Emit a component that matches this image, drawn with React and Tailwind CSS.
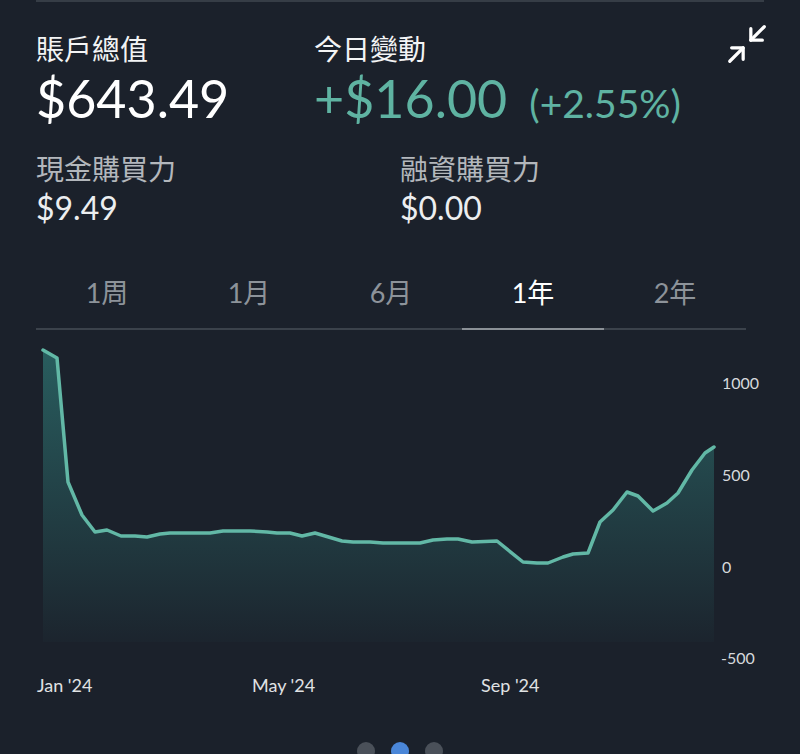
import { Minimize2 } from "lucide-react";

const points = [
  [43, 350], [57, 358], [68, 482], [82, 515], [95, 532], [107, 530], [121, 536],
  [135, 536], [147, 537], [160, 534], [170, 533], [210, 533], [223, 531], [250, 531],
  [267, 532], [277, 533], [290, 533], [302, 536], [315, 533], [342, 541], [353, 542],
  [370, 542], [383, 543], [420, 543], [433, 540], [447, 539], [458, 539], [472, 542],
  [497, 541], [523, 562], [537, 563], [548, 563], [563, 557], [573, 554], [588, 553],
  [600, 522], [613, 510], [627, 492], [638, 496], [653, 511], [667, 503], [678, 493],
  [692, 470], [705, 453], [714, 447],
];

const chartTop = 330;
const tabs = ["1周", "1月", "6月", "1年", "2年"];

function PortfolioChart() {
  const shifted = points.map(([x, y]) => [x, y - chartTop]);
  const line = shifted.map(([x, y], i) => `${i ? "L" : "M"}${x} ${y}`).join(" ");
  const area = `${line} L714 312 L43 312 Z`;

  return (
    <svg width="800" height="370" className="block">
      <defs>
        <linearGradient id="fill" x1="0" y1="15" x2="0" y2="312" gradientUnits="userSpaceOnUse">
          <stop offset="0" stopColor="#34908a" stopOpacity="0.55" />
          <stop offset="0.7" stopColor="#34908a" stopOpacity="0.19" />
          <stop offset="1" stopColor="#34908a" stopOpacity="0.03" />
        </linearGradient>
      </defs>
      <path d={area} fill="url(#fill)" />
      <path d={line} fill="none" stroke="#62b8a6" strokeWidth="3.5" strokeLinejoin="round" strokeLinecap="round" />
      <g fill="#d6d9dc" fontSize="16" fontFamily="Lato, sans-serif">
        <text x="722" y="59">1000</text>
        <text x="722" y="151">500</text>
        <text x="722" y="243">0</text>
        <text x="721" y="334">-500</text>
      </g>
      <g fill="#e0e2e4" fontSize="18" fontFamily="Lato, sans-serif">
        <text x="37" y="362">Jan '24</text>
        <text x="252" y="362">May '24</text>
        <text x="481" y="362">Sep '24</text>
      </g>
    </svg>
  );
}

export default function App() {
  return (
    <div className="min-h-[754px] h-[754px] overflow-hidden bg-[#1b212b] font-[Lato,'Noto_Sans_CJK_TC',sans-serif] text-white">
      <div className="mx-9 border-t-2 border-[#363d46]" />

      <div className="flex px-9 pt-[30px]">
        <div className="w-[278px]">
          <p className="text-[28px] leading-[34px] text-[#f3f4f5]">賬戶總值</p>
          <p className="mt-1 text-[52px] leading-[56px] text-white">$643.49</p>
        </div>
        <div className="flex-1">
          <p className="text-[28px] leading-[34px] text-[#f3f4f5]">今日變動</p>
          <p className="mt-1 text-[52px] leading-[56px] text-[#5fb3a2]">
            +$16.00
            <span className="ml-3 text-[39px]"> (+2.55%)</span>
          </p>
        </div>
        <Minimize2 className="-mt-[11px] -mr-[6px]" size={46} strokeWidth={1.7} color="#ffffff" />
      </div>

      <div className="flex px-9 pt-[21px]">
        <div className="w-[364px]">
          <p className="text-[28px] leading-[34px] text-[#b3b7bc]">現金購買力</p>
          <p className="mt-[2px] text-[32px] leading-[40px] text-[#eceef0]">$9.49</p>
        </div>
        <div className="flex-1">
          <p className="text-[28px] leading-[34px] text-[#b3b7bc]">融資購買力</p>
          <p className="mt-[2px] text-[32px] leading-[40px] text-[#eceef0]">$0.00</p>
        </div>
      </div>

      <div className="mx-9 mt-[48px] flex w-[710px]">
        {tabs.map((tab) => {
          const active = tab === "1年";
          return (
            <div
              key={tab}
              className={
                active
                  ? "flex-1 border-b-2 border-[#8b9197] pb-[18px] text-center text-[27px] leading-[34px] text-white"
                  : "flex-1 border-b-2 border-[#3b424b] pb-[18px] text-center text-[27px] leading-[34px] text-[#8d939a]"
              }
            >
              {tab}
            </div>
          );
        })}
      </div>

      <PortfolioChart />

      <div className="mt-[42px] flex justify-center gap-4">
        <span className="h-[18px] w-[18px] rounded-full bg-[#4a5059]" />
        <span className="h-[18px] w-[18px] rounded-full bg-[#4a86d8]" />
        <span className="h-[18px] w-[18px] rounded-full bg-[#4a5059]" />
      </div>
    </div>
  );
}
